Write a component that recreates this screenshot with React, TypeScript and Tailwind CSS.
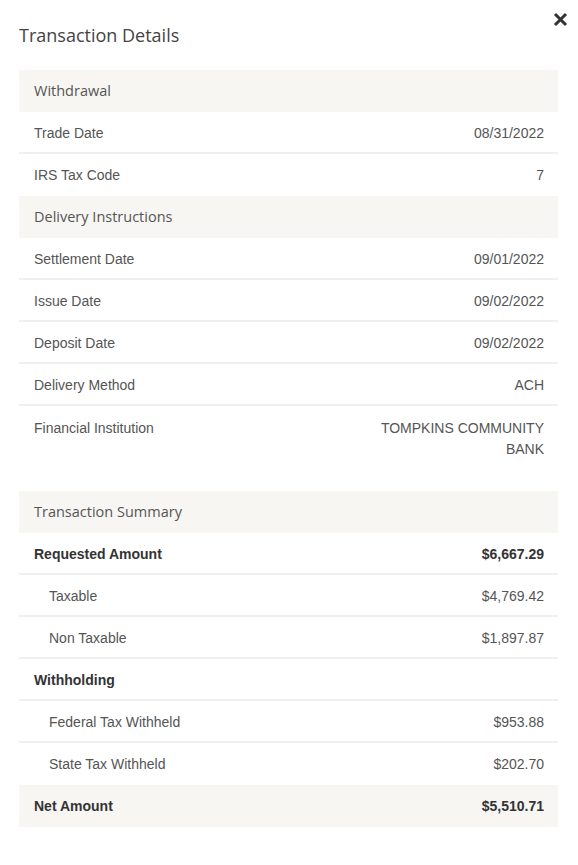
import React from "react";

type Row =
  | { kind: "band"; label: string }
  | { kind: "row"; label: string; value?: string; bold?: boolean; indent?: boolean; border?: boolean };

const rows: Row[] = [
  { kind: "band", label: "Withdrawal" },
  { kind: "row", label: "Trade Date", value: "08/31/2022", border: true },
  { kind: "row", label: "IRS Tax Code", value: "7" },
  { kind: "band", label: "Delivery Instructions" },
  { kind: "row", label: "Settlement Date", value: "09/01/2022", border: true },
  { kind: "row", label: "Issue Date", value: "09/02/2022", border: true },
  { kind: "row", label: "Deposit Date", value: "09/02/2022", border: true },
  { kind: "row", label: "Delivery Method", value: "ACH", border: true },
];

const summary: Row[] = [
  { kind: "row", label: "Requested Amount", value: "$6,667.29", bold: true, border: true },
  { kind: "row", label: "Taxable", value: "$4,769.42", indent: true, border: true },
  { kind: "row", label: "Non Taxable", value: "$1,897.87", indent: true, border: true },
  { kind: "row", label: "Withholding", bold: true, border: true },
  { kind: "row", label: "Federal Tax Withheld", value: "$953.88", indent: true, border: true },
  { kind: "row", label: "State Tax Withheld", value: "$202.70", indent: true },
];

function Band({ label }: { label: string }) {
  return (
    <div className="h-[42px] flex items-center px-[15px] bg-[#f7f6f3] text-[14.5px] text-[#555] font-['Open_Sans',sans-serif]">
      {label}
    </div>
  );
}

function DataRow({ r }: { r: Extract<Row, { kind: "row" }> }) {
  return (
    <div
      className={`h-[42px] flex items-center justify-between pr-[14px] text-[14px] ${
        r.indent ? "pl-[30px]" : "pl-[15px]"
      } ${r.border ? "border-b-2 border-[#f0f0f0] pt-[2px]" : ""} ${
        r.bold ? "font-bold text-[#333]" : "text-[#555]"
      }`}
    >
      <span>{r.label}</span>
      {r.value && <span>{r.value}</span>}
    </div>
  );
}

export default function App() {
  return (
    <div className="w-[578px] h-[865px] bg-white relative font-['Liberation_Sans',Arial,sans-serif]">
      <button className="absolute right-[10px] top-[11px] w-[16px] h-[16px] flex items-center justify-center text-[#333]">
        <svg width="15" height="15" viewBox="0 0 15 15">
          <path d="M2 2 L13 13 M13 2 L2 13" stroke="currentColor" strokeWidth="3" strokeLinecap="butt" />
        </svg>
      </button>
      <div className="px-[19px] pr-[20px]">
        <div className="h-[70px] flex items-center pb-[1px]">
          <h1 className="text-[18px] text-[#444] font-['Open_Sans',sans-serif] leading-none">Transaction Details</h1>
        </div>
        {rows.map((r, i) =>
          r.kind === "band" ? <Band key={i} label={r.label} /> : <DataRow key={i} r={r} />
        )}
        <div className="flex justify-between pl-[15px] pr-[14px] pt-[12px] pb-[11px] mb-[20px] text-[14px] leading-[21px] text-[#555]">
          <span>Financial Institution</span>
          <span className="text-right">
            TOMPKINS COMMUNITY
            <br />
            BANK
          </span>
        </div>
        <Band label="Transaction Summary" />
        {summary.map((r, i) => (r.kind === "row" ? <DataRow key={i} r={r} /> : null))}
        <div className="h-[42px] flex items-center justify-between pl-[15px] pr-[14px] bg-[#f7f6f3] text-[14px] font-bold text-[#333]">
          <span>Net Amount</span>
          <span>$5,510.71</span>
        </div>
      </div>
    </div>
  );
}
